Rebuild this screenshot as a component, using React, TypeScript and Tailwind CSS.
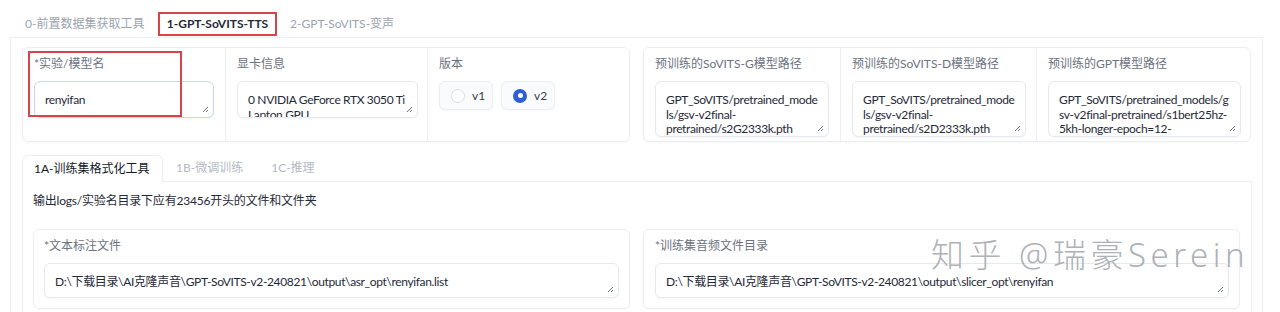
import React from "react";

const FONT = { fontFamily: '"Lato","Noto Sans CJK SC",sans-serif' };

function Grip() {
  return (
    <svg width="7" height="7" viewBox="0 0 7 7" className="absolute bottom-[4px] right-[4px]">
      <path d="M6 1L1 6M6 4L4 6" stroke="#6b7280" strokeWidth="1" />
    </svg>
  );
}

function Area({ lines, h, w, focus }: { lines: string[]; h: string; w: string; focus?: boolean }) {
  return (
    <div
      className={`relative ${h} ${w} overflow-hidden rounded-[6px] border ${focus ? "border-[#c7d7ef]" : "border-[#e6e9ef]"} bg-white px-[10px] pt-[11px] text-[12px] leading-[14.5px] tracking-[-0.35px] text-[#1f2937] shadow-[0_1px_2px_rgba(0,0,0,0.04)]`}
    >
      {lines.map((l) => (
        <div key={l} className="whitespace-pre">
          {l}
        </div>
      ))}
      <Grip />
    </div>
  );
}

function Col({ label, children, w, border = true }: { label: string; children: React.ReactNode; w: string; border?: boolean }) {
  return (
    <div className={`${w} h-full px-[11px] pt-[7px] ${border ? "border-l border-[#eceef2]" : ""}`}>
      <div className="mb-[8px] whitespace-nowrap text-[12px] leading-[18px] text-[#6b7280]">{label}</div>
      {children}
    </div>
  );
}

function Radio({ label, on }: { label: string; on?: boolean }) {
  return (
    <div className="flex h-[29px] w-[54px] items-center gap-[7px] rounded-[6px] border border-[#eceef2] bg-[#fafbfc] pl-[11px] shadow-[0_1px_2px_rgba(0,0,0,0.04)]">
      {on ? (
        <span className="flex h-[14px] w-[14px] items-center justify-center rounded-full bg-[#2f5fd6]">
          <span className="h-[5px] w-[5px] rounded-full bg-white" />
        </span>
      ) : (
        <span className="h-[14px] w-[14px] rounded-full border border-[#d7dbe2] bg-white" />
      )}
      <span className="text-[12px] text-[#374151]">{label}</span>
    </div>
  );
}

export default function App() {
  return (
    <div className="relative h-[312px] w-[1280px] overflow-hidden bg-white" style={FONT}>
      {/* top tabs */}
      <div className="flex h-[37px] items-start whitespace-nowrap pl-[12px] pt-[12px] text-[12px]">
        <div className="flex h-[24px] w-[144px] items-center px-[13px] text-[#9ca3af]">0-前置数据集获取工具</div>
        <div className="ml-[2px] flex h-[24px] w-[119px] items-center justify-center border-2 border-[#d9434a] font-bold text-[#1f2937]">
          1-GPT-SoVITS-TTS
        </div>
        <div className="flex h-[24px] items-center px-[13px] text-[#9ca3af]">2-GPT-SoVITS-变声</div>
      </div>

      {/* outer panel */}
      <div className="ml-[10px] h-[275px] w-[1253px] border border-b-0 border-[#eceef2] px-[11px] pt-[9px]">
        <div className="flex gap-[13px]">
          <div className="relative flex h-[95px] w-[608px] rounded-[6px] border border-[#eceef2] shadow-[0_1px_2px_rgba(0,0,0,0.03)]">
            <Col label="*实验/模型名" w="w-[203px]" border={false}>
              <Area lines={["renyifan"]} h="h-[37px]" w="w-[180px]" focus />
            </Col>
            <Col label="显卡信息" w="w-[202px]">
              <Area lines={["0 NVIDIA GeForce RTX 3050 Ti", "Lapton GPU"]} h="h-[37px]" w="w-[181px]" />
            </Col>
            <Col label="版本" w="w-[203px]">
              <div className="flex gap-[8px]">
                <Radio label="v1" />
                <Radio label="v2" on />
              </div>
            </Col>
            <div className="pointer-events-none absolute left-[5px] top-[3px] h-[66px] w-[154px] border-2 border-[#d9434a]" />
          </div>
          <div className="flex h-[95px] w-[608px] rounded-[6px] border border-[#eceef2] shadow-[0_1px_2px_rgba(0,0,0,0.03)]">
            <Col label="预训练的SoVITS-G模型路径" w="w-[197px]" border={false}>
              <Area
                lines={["GPT_SoVITS/pretrained_mode", "ls/gsv-v2final-", "pretrained/s2G2333k.pth"]}
                h="h-[56px]"
                w="w-[174px]"
              />
            </Col>
            <Col label="预训练的SoVITS-D模型路径" w="w-[196px]">
              <Area
                lines={["GPT_SoVITS/pretrained_mode", "ls/gsv-v2final-", "pretrained/s2D2333k.pth"]}
                h="h-[56px]"
                w="w-[174px]"
              />
            </Col>
            <Col label="预训练的GPT模型路径" w="w-[215px]">
              <Area
                lines={["GPT_SoVITS/pretrained_models/g", "sv-v2final-pretrained/s1bert25hz-", "5kh-longer-epoch=12-"]}
                h="h-[56px]"
                w="w-[193px]"
              />
            </Col>
          </div>
        </div>

        {/* sub tabs */}
        <div className="mt-[13px] flex h-[26px] items-end whitespace-nowrap text-[12px]">
          <div className="relative -mb-px flex h-[27px] w-[141px] items-center rounded-t-[6px] border border-b-0 border-[#eceef2] bg-white px-[11px] text-[#111827]">
            1A-训练集格式化工具
          </div>
          <div className="flex h-[26px] items-center pl-[13px] text-[#b4b9c2]">1B-微调训练</div>
          <div className="flex h-[26px] items-center pl-[28px] text-[#b4b9c2]">1C-推理</div>
        </div>
        <div className="h-[200px] w-[1230px] border border-b-0 border-[#eceef2] px-[10px] pt-[10px]">
          <div className="text-[12px] leading-[18px] tracking-[-0.2px] text-[#1f2937]">输出logs/实验名目录下应有23456开头的文件和文件夹</div>
          <div className="mt-[19px] flex gap-[13px]">
            <div className="h-[80px] w-[597px] rounded-[6px] border border-[#eceef2] px-[10px] pt-[7px] shadow-[0_1px_2px_rgba(0,0,0,0.03)]">
              <div className="mb-[8px] text-[12px] leading-[18px] text-[#6b7280]">*文本标注文件</div>
              <Area
                lines={["D:\\下载目录\\AI克隆声音\\GPT-SoVITS-v2-240821\\output\\asr_opt\\renyifan.list"]}
                h="h-[35px]"
                w="w-[575px]"
              />
            </div>
            <div className="h-[80px] w-[597px] rounded-[6px] border border-[#eceef2] px-[11px] pt-[7px] shadow-[0_1px_2px_rgba(0,0,0,0.03)]">
              <div className="mb-[8px] text-[12px] leading-[18px] text-[#6b7280]">*训练集音频文件目录</div>
              <Area
                lines={["D:\\下载目录\\AI克隆声音\\GPT-SoVITS-v2-240821\\output\\slicer_opt\\renyifan"]}
                h="h-[35px]"
                w="w-[574px]"
              />
            </div>
          </div>
        </div>
      </div>

      {/* watermark */}
      <div
        className="pointer-events-none absolute left-[931px] top-[238px] whitespace-nowrap text-[33px] font-light leading-[33px] tracking-[4.5px] text-[#a3a7ad]/90"
        style={{ fontFamily: '"Noto Sans","Noto Sans CJK SC",sans-serif' }}
      >
        知乎 @瑞豪Serein
      </div>
    </div>
  );
}
